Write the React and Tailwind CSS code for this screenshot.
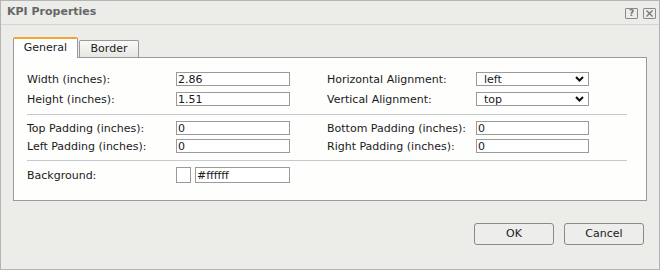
import React from 'react'

const font = { fontFamily: '"DejaVu Sans", Verdana, sans-serif' }

function Field({ value, w = 'w-[114px]' }) {
  return (
    <div className={`${w} h-[14px] border border-[#9a9a9a] bg-white flex items-center pl-[1px] text-[11px] leading-none text-[#1a1a1a]`}>
      {value}
    </div>
  )
}

function Select({ value }) {
  return (
    <div className="w-[113px] h-[14px] border border-[#9a9a9a] bg-white flex items-center justify-between pl-[7px] pr-[4px] text-[11px] leading-none text-[#1a1a1a]">
      <span>{value}</span>
      <svg width="9" height="6" viewBox="0 0 9 6">
        <polyline points="1,1 4.5,4.5 8,1" fill="none" stroke="#111" strokeWidth="2" />
      </svg>
    </div>
  )
}

function Label({ children }) {
  return <div className="w-[149px] text-[11px] leading-none text-[#1a1a1a]">{children}</div>
}

function Row({ children, className = '' }) {
  return <div className={`flex items-center h-[14px] ${className}`}>{children}</div>
}

function Sep({ className = '' }) {
  return <div className={`w-[600px] h-px bg-[#c3cad2] ${className}`} />
}

export default function App() {
  return (
    <div style={font} className="w-[660px] h-[270px] bg-[#ecece9] border border-[#b4b4b4] flex flex-col">
      {/* title bar */}
      <div className="h-[24px] shrink-0 border-b border-[#d4d4d2] flex items-center justify-between pl-[6px] pr-[3px]">
        <span className="text-[11px] font-bold text-[#666]">KPI Properties</span>
        <div className="flex items-center gap-[5px] pt-[2px]">
          <div className="w-[13px] h-[11px] border border-[#8a8a8a] rounded-[1px] flex items-center justify-center text-[9px] font-bold leading-none text-[#777]">
            ?
          </div>
          <div className="w-[13px] h-[11px] border border-[#8a8a8a] rounded-[1px] flex items-center justify-center">
            <svg width="7" height="7" viewBox="0 0 7 7">
              <path d="M0.5 0.5 L6.5 6.5 M6.5 0.5 L0.5 6.5" stroke="#777" strokeWidth="1.3" />
            </svg>
          </div>
        </div>
      </div>

      <div className="px-[12px] pt-[12px]">
        {/* tabs */}
        <div className="flex items-end">
          <div className="relative z-10 mb-[-1px] w-[65px] h-[21px] bg-white border-x border-[#9a9a9a] border-t-2 border-t-[#f0a630] rounded-t-[2px] flex items-center justify-center text-[11px] text-[#1a1a1a]">
            General
          </div>
          <div className="ml-[1px] w-[60px] h-[17px] bg-gradient-to-b from-[#fafaf9] to-[#e6e6e3] border-x border-t border-[#9a9a9a] rounded-t-[2px] flex items-center justify-center text-[11px] text-[#1a1a1a]">
            Border
          </div>
        </div>

        {/* panel */}
        <div className="w-[634px] h-[144px] bg-[#fefefd] border border-[#9a9a9a] pl-[13px] pt-[14px]">
          <Row>
            <Label>Width (inches):</Label>
            <Field value="2.86" />
            <div className="w-[37px]" />
            <Label>Horizontal Alignment:</Label>
            <Select value="left" />
          </Row>
          <Row className="mt-[6px]">
            <Label>Height (inches):</Label>
            <Field value="1.51" />
            <div className="w-[37px]" />
            <Label>Vertical Alignment:</Label>
            <Select value="top" />
          </Row>
          <Sep className="mt-[8px]" />
          <Row className="mt-[6px]">
            <Label>Top Padding (inches):</Label>
            <Field value="0" />
            <div className="w-[37px]" />
            <Label>Bottom Padding (inches):</Label>
            <Field value="0" w="w-[113px]" />
          </Row>
          <Row className="mt-[4px]">
            <Label>Left Padding (inches):</Label>
            <Field value="0" />
            <div className="w-[37px]" />
            <Label>Right Padding (inches):</Label>
            <Field value="0" w="w-[113px]" />
          </Row>
          <Sep className="mt-[7px]" />
          <div className="flex items-center h-[16px] mt-[6px]">
            <Label>Background:</Label>
            <div className="w-[15px] h-[16px] border border-[#9a9a9a] bg-white" />
            <div className="ml-[4px] w-[95px] h-[16px] border border-[#9a9a9a] bg-white flex items-center pl-[1px] text-[11px] leading-none text-[#1a1a1a]">
              #ffffff
            </div>
          </div>
        </div>
      </div>

      {/* buttons */}
      <div className="flex justify-end gap-[10px] pr-[15px] mt-[22px]">
        <button className="w-[80px] h-[22px] border border-[#8a8a8a] rounded-[3px] bg-[#ededeb] text-[11px] text-[#1a1a1a]">OK</button>
        <button className="w-[80px] h-[22px] border border-[#8a8a8a] rounded-[3px] bg-[#ededeb] text-[11px] text-[#1a1a1a]">Cancel</button>
      </div>
    </div>
  )
}
